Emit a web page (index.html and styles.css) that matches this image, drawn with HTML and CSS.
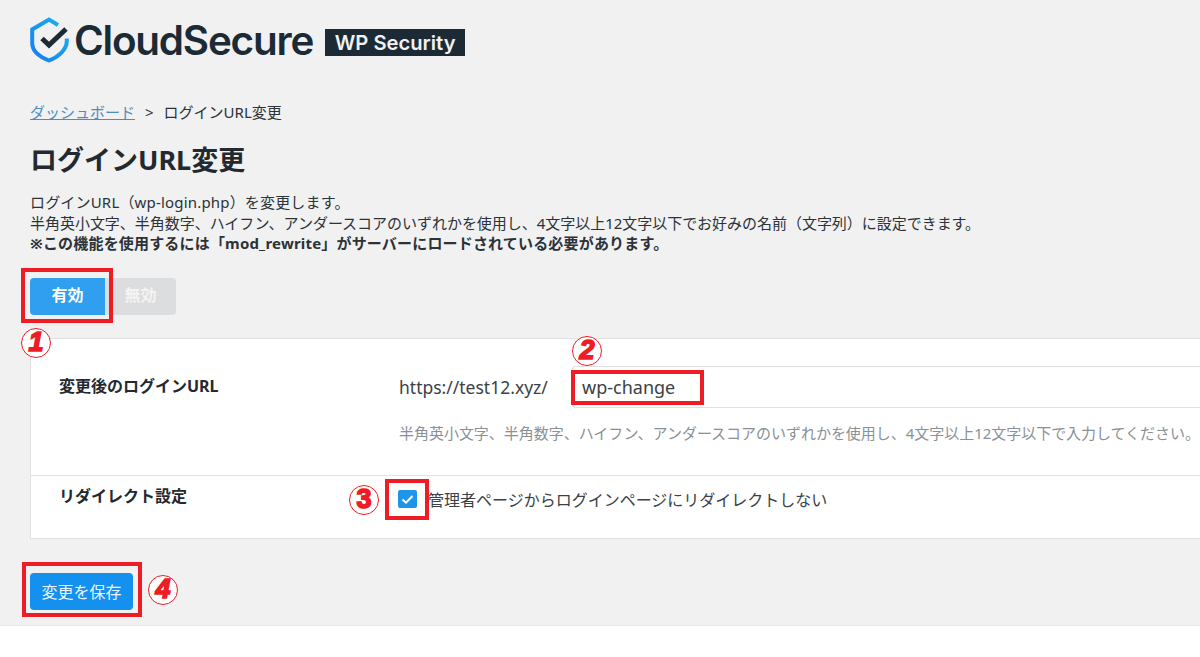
FILE: index.html
```html
<!DOCTYPE html>
<html lang="ja">
<head>
<meta charset="utf-8">
<title>ログインURL変更</title>
<link rel="stylesheet" href="styles.css">
</head>
<body>
<div class="page">
  <header class="brand">
    <svg class="shield" viewBox="0 0 40 46" width="40" height="46" aria-hidden="true">
      <defs><linearGradient id="sg" x1="0" y1="1" x2="1" y2="0"><stop offset="0" stop-color="#1a7cf0"/><stop offset="1" stop-color="#17b5ee"/></linearGradient></defs>
      <path d="M28 8 19 2.5 2.2 12.5V26C2.200 34 10 40 19 43.500 28 40 36.800 33 36.800 24V21.500" fill="none" stroke="url(#sg)" stroke-width="4" stroke-linejoin="miter"/>
      <path d="M12 21.500 19 28 36 12" fill="none" stroke="#1b2a35" stroke-width="5"/>
    </svg>
    <span class="brand-name">CloudSecure</span>
    <span class="brand-tag">WP Security</span>
  </header>
  <nav class="crumbs"><a href="#">ダッシュボード</a><span class="sep">&gt;</span><span>ログインURL変更</span></nav>
  <h1>ログインURL変更</h1>
  <div class="desc">
    <p class="lead">ログインURL（wp-login.php）を変更します。</p>
    <p class="rule">半角英小文字、半角数字、ハイフン、アンダースコアのいずれかを使用し、4文字以上12文字以下でお好みの名前（文字列）に設定できます。</p>
    <p class="strong">※この機能を使用するには「mod_rewrite」がサーバーにロードされている必要があります。</p>
  </div>
  <div class="toggle"><span class="tg on">有効</span><span class="tg off">無効</span></div>
  <section class="card">
    <div class="row first">
      <div class="label">変更後のログインURL</div>
      <div class="field">
        <div class="url-line"><span class="base">https://test12.xyz/</span><span class="input">wp-change</span></div>
        <p class="hint">半角英小文字、半角数字、ハイフン、アンダースコアのいずれかを使用し、4文字以上12文字以下で入力してください。</p>
      </div>
    </div>
    <div class="row second">
      <div class="label">リダイレクト設定</div>
      <div class="field check-line">
        <span class="check"><svg viewBox="0 0 19 18" width="19" height="18" aria-hidden="true"><path d="M4.500 9.500l3.500 3.200 6.500-6.700" fill="none" stroke="#fff" stroke-width="2"/></svg></span>
        <span>管理者ページからログインページにリダイレクトしない</span>
      </div>
    </div>
  </section>
  <div class="actions"><span class="save">変更を保存</span></div>
</div>

<div class="mark box-1"></div>
<div class="mark box-2"></div>
<div class="mark box-3"></div>
<div class="mark box-4"></div>
<span class="num num-1">1</span>
<span class="num num-2">2</span>
<span class="num num-3">3</span>
<span class="num num-4">4</span>
</body>
</html>
```

FILE: styles.css
```css
* { box-sizing: border-box; }
html, body { margin: 0; padding: 0; background: #fff; }
body {
  position: relative;
  height: 657px;
  overflow: hidden;
  font-family: "Noto Sans", "Noto Sans CJK JP", sans-serif;
  color: #2b3238;
}
p { margin: 0; }
.page {
  height: 626px;
  background: #f1f1f1;
  border-bottom: 1px solid #e6e6e6;
  padding: 17px 0 0 30px;
}
.brand { display: flex; align-items: center; height: 46px; }
.shield { flex: none; margin-right: 4px; }
.brand-name {
  font-family: Inter, "Liberation Sans", sans-serif;
  font-size: 40.4px;
  font-weight: 600;
  letter-spacing: -1.2px;
  color: #1b2a35;
  margin-right: 12px;
}
.brand-tag {
  font-family: Inter, "Liberation Sans", sans-serif;
  font-weight: 600;
  background: #1b2a35;
  color: #f1f1f1;
  font-size: 20.2px;
  line-height: 27px;
  height: 27px;
  width: 140px;
  text-align: center;
  margin-top: 5px;
  white-space: nowrap;
}
.crumbs { margin-top: 38px; font-size: 15px; line-height: 22px; display: flex; }
.crumbs a { color: #4a8dc4; text-decoration: underline; }
.crumbs .sep { margin: 0 10px; }
h1 { margin: 18px 0 0; font-size: 27px; line-height: 38px; font-weight: 700; color: #23292e; }
.desc { margin-top: 13px; font-size: 15px; line-height: 20.5px; color: #2b3238; white-space: nowrap; }
.desc .lead { letter-spacing: 0.18px; }
.desc .rule { letter-spacing: -0.03px; }
.desc .strong { font-weight: 700; letter-spacing: 0.18px; }
.toggle { display: flex; margin-top: 24px; height: 37px; }
.tg { display: flex; align-items: center; justify-content: center; font-size: 16px; font-weight: 700; color: #fff; padding-bottom: 5px; }
.tg.on { width: 75px; background: #319fef; border-radius: 4px 0 0 4px; }
.tg.off { width: 71px; background: #dcdddf; color: #f4f4f4; border-radius: 0 4px 4px 0; }
.card {
  margin-top: 23px;
  height: 201px;
  background: #fff;
  border: 1px solid #e2e2e2;
  border-right: 0;
}
.row { display: flex; margin-left: 0; }
.label { flex: none; width: 368px; padding-left: 28px; font-size: 16px; line-height: 20px; font-weight: 700; color: #23292e; }
.row.first { height: 137px; padding-top: 37px; border-bottom: 1px solid #e2e2e2; }
.row.second { padding-top: 10px; }
.url-line { display: flex; align-items: center; height: 42px; margin-top: -10px; }
.base { font-size: 17.5px; width: 173px; color: #3a4147; white-space: nowrap; }
.input {
  width: 660px;
  height: 42px;
  border: 1px solid #e2e2e2;
  border-right: 0;
  border-radius: 4px 0 0 4px;
  padding-left: 9px;
  font-size: 18px;
  line-height: 40px;
  color: #3a4147;
}
.hint { margin-top: 15px; font-size: 15px; line-height: 20px; color: #8a9096; white-space: nowrap; letter-spacing: -0.03px; }
.check-line { display: flex; align-items: center; font-size: 16px; color: #3a4147; height: 26px; }
.check { width: 19px; height: 18px; background: #1f95ea; border-radius: 2px; margin: 0 11px 0 -1px; display: block; flex: none; }
.check svg { display: block; }
.actions { margin-top: 34px; }
.save {
  display: flex;
  align-items: center;
  justify-content: center;
  width: 103px;
  height: 37px;
  background: #1490ee;
  color: #eaf5fe;
  font-size: 16px;
  border-radius: 4px;
}
.mark { position: absolute; border: 4px solid #ee1c25; }
.box-1 { left: 21px; top: 268px; width: 92px; height: 55px; }
.box-2 { left: 571px; top: 370px; width: 133px; height: 35px; }
.box-3 { left: 385px; top: 479px; width: 44px; height: 41px; }
.box-4 { left: 22px; top: 562px; width: 120px; height: 55px; }
.num {
  position: absolute;
  width: 30px;
  height: 30px;
  border: 1.5px solid #ee1c25;
  border-radius: 50%;
  background: #fff;
  color: #ee1c25;
  font-family: "Liberation Sans", sans-serif;
  font-weight: 700;
  font-style: italic;
  font-size: 27px;
  line-height: 27px;
  text-align: center;
  -webkit-text-stroke: 1.6px #ee1c25;
}
.num-1 { left: 21px; top: 328px; }
.num-2 { left: 572px; top: 336px; }
.num-3 { left: 349px; top: 485px; font-style: normal; }
.num-4 { left: 148px; top: 575px; }
```
